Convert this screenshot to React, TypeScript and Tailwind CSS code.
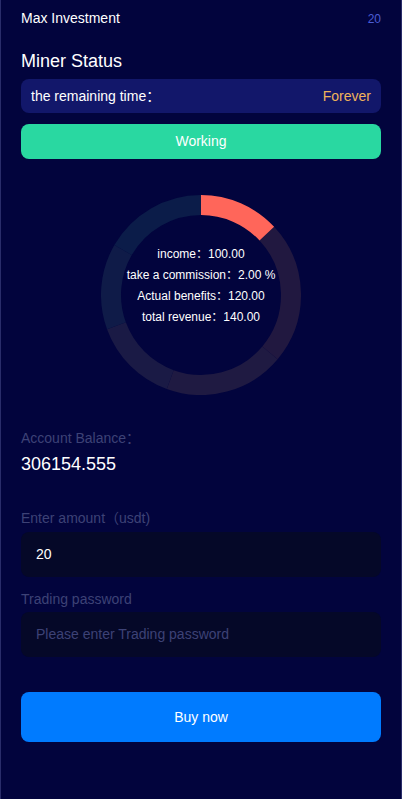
import React from "react";

function arc(cx: number, cy: number, r: number, a0: number, a1: number) {
  const rad = (a: number) => ((a - 90) * Math.PI) / 180;
  const x0 = cx + r * Math.cos(rad(a0));
  const y0 = cy + r * Math.sin(rad(a0));
  const x1 = cx + r * Math.cos(rad(a1));
  const y1 = cy + r * Math.sin(rad(a1));
  const large = a1 - a0 > 180 ? 1 : 0;
  return `M ${x0} ${y0} A ${r} ${r} 0 ${large} 1 ${x1} ${y1}`;
}

function Ring() {
  const segs: [number, number, string][] = [
    [47, 130, "#211840"],
    [130, 200, "#1f1a42"],
    [200, 250, "#1a1a45"],
    [250, 300, "#0f1b48"],
    [300, 360, "#0b1c49"],
    [0, 47, "#ff665a"],
  ];
  return (
    <svg width="200" height="200" viewBox="0 0 200 200" className="absolute inset-0">
      {segs.map(([a, b, c], i) => (
        <path key={i} d={arc(100, 100, 90, a, b)} stroke={c} strokeWidth="20" fill="none" />
      ))}
    </svg>
  );
}

export default function App() {
  return (
    <div
      lang="zh-CN"
      className="w-[402px] h-[799px] bg-[#02043d] border-x border-[#2a2d6a] px-[20px] text-white"
      style={{ fontFamily: "'Liberation Sans', Arial, 'Noto Sans CJK SC', sans-serif" }}
    >
      <div className="flex items-center justify-between h-[36px] pt-[1px]">
        <span className="text-[14px]">Max Investment</span>
        <span className="text-[12px] text-[#4b5cd6]">20</span>
      </div>
      <div className="mt-[14px] text-[18px] leading-[22px]">Miner Status</div>
      <div className="mt-[7px] h-[34px] rounded-[8px] bg-[#12176a] flex items-center justify-between px-[10px] text-[14px]">
        <span>the remaining time：</span>
        <span className="text-[#f0b35b]">Forever</span>
      </div>
      <div className="mt-[11px] h-[35px] rounded-[8px] bg-[#29d8a1] flex items-center justify-center text-[14px]">
        Working
      </div>
      <div className="mt-[36px] flex justify-center">
        <div className="relative w-[200px] h-[200px]">
          <Ring />
          <div className="absolute inset-0 flex flex-col items-center justify-center text-[12px] leading-[21px] pb-[18px]">
            <div>income：100.00</div>
            <div>take a commission：2.00 %</div>
            <div>Actual benefits：120.00</div>
            <div>total revenue：140.00</div>
          </div>
        </div>
      </div>
      <div className="mt-[33px] text-[14px] text-[#3d4276] leading-[20px]">Account Balance：</div>
      <div className="mt-[5px] text-[18px] leading-[22px]">306154.555</div>
      <div className="mt-[33px] text-[14px] text-[#3d4276] leading-[20px]">Enter amount（usdt)</div>
      <div className="mt-[4px] h-[45px] rounded-[8px] bg-[#050828] flex items-center px-[15px] text-[14px]">
        20
      </div>
      <div className="mt-[12px] text-[14px] text-[#3d4276] leading-[20px]">Trading password</div>
      <div className="mt-[3px] h-[45px] rounded-[8px] bg-[#050828] flex items-center px-[15px] text-[14px] text-[#3d4276]">
        Please enter Trading password
      </div>
      <div className="mt-[35px] h-[50px] rounded-[8px] bg-[#007bff] flex items-center justify-center text-[14px]">
        Buy now
      </div>
    </div>
  );
}
